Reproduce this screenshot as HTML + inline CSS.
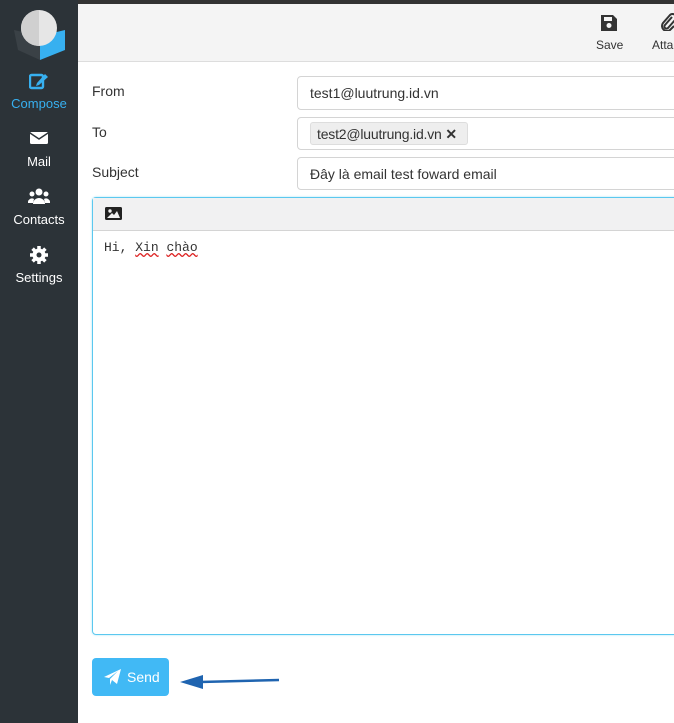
<!DOCTYPE html><html><head><meta charset="utf-8"><style>
body{margin:0;width:674px;height:723px;overflow:hidden;background:#fff;font-family:"Liberation Sans",sans-serif;position:relative}
.a{position:absolute}
.side{left:0;top:0;width:78px;height:723px;background:#2c3338}
.nav{width:78px;text-align:center;color:#fff;font-size:13px}
.lbl{left:92px;font-size:14px;color:#333}
.inp{left:297px;width:400px;border:1px solid #d4d4d4;border-radius:4px;background:#fff;box-sizing:border-box;font-size:14px;color:#333}
</style></head><body>
<div class="a" style="left:0;top:0;width:674px;height:4px;background:#333"></div>
<div class="a side"></div>
<div class="a" style="left:78px;top:4px;width:596px;height:57px;background:#f4f4f4;border-bottom:1px solid #ddd"></div>
<svg class="a" style="left:12px;top:6px" width="54" height="54" viewBox="0 0 54 54"><path d="M2 24 L28 30 L28 54 L6 44 Z" fill="#3a4146"/><path d="M28 30 L53 24 L53 44 L28 54 Z" fill="#37b0f0"/><circle cx="27" cy="22" r="18" fill="#e6e6e6"/><path d="M27 4 a18 18 0 0 0 0 36 z" fill="#d0d0d0"/></svg>
<svg class="a" style="left:29px;top:72px" width="20" height="18" viewBox="0 0 20 18"><rect x="1" y="3" width="13" height="13" rx="1.5" fill="none" stroke="#37b0f0" stroke-width="2.4"/><path d="M8 11 L16 2 L19 5 L10 13 L7 14Z" fill="#37b0f0"/></svg>
<div class="a nav" style="top:96px;color:#37b0f0">Compose</div>
<svg class="a" style="left:30px;top:131px" width="18" height="14"><rect x="0" y="1" width="18" height="12" rx="1.5" fill="#fff"/><path d="M0 2 L9 8 L18 2" stroke="#2c3338" stroke-width="1.5" fill="none"/></svg>
<div class="a nav" style="top:154px">Mail</div>
<svg class="a" style="left:28px;top:188px" width="22" height="16"><circle cx="11" cy="4" r="3.5" fill="#fff"/><circle cx="4" cy="6" r="2.5" fill="#fff"/><circle cx="18" cy="6" r="2.5" fill="#fff"/><path d="M5 16 a6 6 0 0 1 12 0z" fill="#fff"/><path d="M0 15 a4 4 0 0 1 6-4 L5 15z M22 15 a4 4 0 0 0 -6-4 L17 15z" fill="#fff"/></svg>
<div class="a nav" style="top:212px">Contacts</div>
<svg class="a" style="left:30px;top:246px" width="18" height="18" viewBox="0 0 18 18"><circle cx="9" cy="9" r="6.5" fill="#fff"/><g stroke="#fff" stroke-width="3.5"><path d="M9 0v18M0 9h18M2.6 2.6l12.8 12.8M15.4 2.6L2.6 15.4"/></g><circle cx="9" cy="9" r="2.5" fill="#2c3338"/></svg>
<div class="a nav" style="top:270px">Settings</div>
<svg class="a" style="left:600px;top:14px" width="18" height="18"><path d="M1 1h12l4 4v12H1z" fill="#333"/><rect x="4" y="3" width="8" height="4" fill="#f4f4f4"/><circle cx="9" cy="11.5" r="2.5" fill="#f4f4f4"/></svg>
<div class="a" style="left:596px;top:38px;font-size:12px;color:#333">Save</div>
<svg class="a" style="left:660px;top:13px" width="16" height="18"><path d="M12 4 L5 12 a2 2 0 0 0 3 3 L15 7 a3.5 3.5 0 0 0 -5 -5 L3 10 a5 5 0 0 0 7 7 L14 13" stroke="#333" stroke-width="2" fill="none"/></svg>
<div class="a" style="left:652px;top:38px;font-size:12px;color:#333">Atta</div>
<div class="a lbl" style="top:83px">From</div>
<div class="a lbl" style="top:124px">To</div>
<div class="a lbl" style="top:164px">Subject</div>
<div class="a inp" style="top:76px;height:34px;padding:8px 12px">test1@luutrung.id.vn</div>
<div class="a inp" style="top:117px;height:33px"><div class="a" style="left:12px;top:4px;height:23px;width:158px;background:#eee;border:1px solid #ddd;border-radius:3px;box-sizing:border-box;padding:3px 6px;font-size:14px;white-space:nowrap;letter-spacing:-0.2px">test2@luutrung.id.vn <b>✕</b></div></div>
<div class="a inp" style="top:157px;height:33px;padding:8px 12px">Đây là email test foward email</div>
<div class="a" style="left:92px;top:197px;width:600px;height:438px;border:1px solid #5bc8ef;border-radius:4px;box-sizing:border-box;box-shadow:0 0 2px #a6e2f7"></div>
<div class="a" style="left:93px;top:198px;width:590px;height:32px;background:#f1f1f2;border-bottom:1px solid #d4d4d4"></div>
<svg class="a" style="left:105px;top:207px" width="17" height="13"><rect width="17" height="13" rx="1.5" fill="#222"/><circle cx="5" cy="4" r="1.7" fill="#f1f1f2"/><path d="M2 11 L7 6 L9 8 L12 4 L15 11Z" fill="#f1f1f2"/></svg>
<div class="a" style="left:104px;top:240px;font-family:'Liberation Mono',monospace;font-size:13px;color:#333">Hi, <span style="text-decoration:underline wavy #d22">Xin</span> <span style="text-decoration:underline wavy #d22">chào</span></div>
<div class="a" style="left:92px;top:658px;width:77px;height:38px;background:#41b9f5;border-radius:4px"></div>
<svg class="a" style="left:104px;top:669px" width="17" height="16"><path d="M0 8 L17 0 L13 15 L8 11 L6 16 L6 10 L14 2 L5 9Z" fill="#fff"/></svg>
<div class="a" style="left:127px;top:669px;font-size:14px;color:#fff">Send</div>
<svg class="a" style="left:178px;top:672px" width="104" height="20"><path d="M22 10 L101 8" stroke="#1f64b0" stroke-width="2.5"/><path d="M2 10 L25 3 L25 17Z" fill="#1f64b0"/></svg>
</body></html>
